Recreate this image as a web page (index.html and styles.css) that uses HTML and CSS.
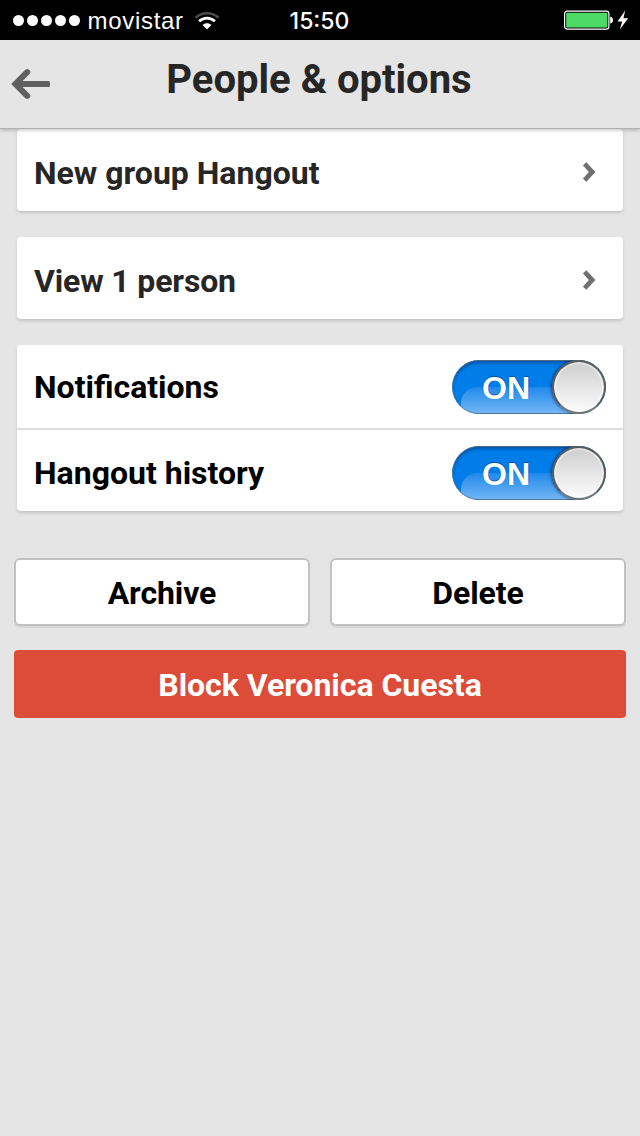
FILE: index.html
```html
<!DOCTYPE html>
<html lang="en">
<head>
<meta charset="utf-8">
<title>People &amp; options</title>
<link rel="stylesheet" href="styles.css">
</head>
<body>
<div class="status">
  <div class="signal"><i class="dot"></i><i class="dot"></i><i class="dot"></i><i class="dot"></i><i class="dot"></i></div>
  <span class="carrier">movistar</span>
  <svg class="wifi" width="26" height="20" viewBox="0 0 26 20" fill="none">
    <path d="M1.6 6.8C8 .7 18 .7 24.4 6.8" stroke="#4b4b4b" stroke-width="2.7"/>
    <path d="M5.1 10.2c4.6-4.2 11.2-4.2 15.8 0" stroke="#fff" stroke-width="2.8"/>
    <path d="M8.6 14c2.4-2.4 6.4-2.4 8.8 0L13 18.6z" fill="#fff"/>
  </svg>
  <span class="time">15:50</span>
  <svg class="battery" width="66" height="24" viewBox="0 0 66 24">
    <rect x=".6" y="3.1" width="44.3" height="18" rx="2.6" fill="#000" stroke="#fff" stroke-width="1.2"/>
    <rect x="2.2" y="4.7" width="41.2" height="14.8" rx="1" fill="#4cd964"/>
    <path d="M46.2 8.7c3.7 0 3.7 6.8 0 6.8z" fill="#fff"/>
    <path d="M61.2 2.5 53.6 13.4h4.6l-2.4 8 8.4-11.2h-4.8z" fill="#fff"/>
  </svg>
</div>
<header class="header">
  <svg class="back" width="42" height="34" viewBox="0 0 42 34" fill="none" stroke="#606060">
    <path d="M18.2 5.2 6.4 17l11.8 11.8" stroke-width="6" stroke-linecap="round"/>
    <rect x="6" y="14" width="35" height="6" rx="1.5" fill="#606060" stroke="none"/>
  </svg>
  <h1 class="title">People &amp; options</h1>
</header>
<main class="content">
  <section class="card link">
    <span>New group Hangout</span>
    <svg class="chevron" width="14" height="22" viewBox="0 0 14 22" fill="none" stroke="#707070" stroke-width="4.8"><path d="M1.6 2.8 9.2 11l-7.6 8.2"/></svg>
  </section>
  <section class="card link">
    <span class="people">View 1 person</span>
    <svg class="chevron" width="14" height="22" viewBox="0 0 14 22" fill="none" stroke="#707070" stroke-width="4.8"><path d="M1.6 2.8 9.2 11l-7.6 8.2"/></svg>
  </section>
  <section class="card settings">
    <div class="row"><span>Notifications</span>
      <div class="toggle"><span class="gloss"></span><b class="state">ON</b><span class="knob"></span></div></div>
    <div class="row second"><span>Hangout history</span>
      <div class="toggle"><span class="gloss"></span><b class="state">ON</b><span class="knob"></span></div></div>
  </section>
  <div class="actions">
    <button class="button">Archive</button>
    <button class="button">Delete</button>
    <button class="button block">Block Veronica Cuesta</button>
  </div>
</main>
</body>
</html>
```
FILE: styles.css
```css
* { box-sizing: border-box; }
body {
  margin: 0;
  min-height: 1136px;
  background: #e5e5e5;
  font: bold 32px/40px Roboto, sans-serif;
  color: #000;
}
svg { display: block; flex: none; }

.status {
  position: relative;
  display: flex;
  align-items: center;
  height: 40px;
  padding: 0 10px 0 13px;
  background: #000;
  color: #fff;
}
.signal { display: flex; gap: 3px; }
.dot { width: 11px; height: 11px; border-radius: 50%; background: #fff; }
.carrier {
  width: 98px;
  margin-left: 7.5px;
  padding-top: 2px;
  font: 400 24px/40px "Liberation Sans", Arial, sans-serif;
  letter-spacing: .7px;
}
.wifi { margin: 1px 0 0 8px; }
.time {
  position: absolute;
  left: 0;
  right: 1px;
  top: 1px;
  text-align: center;
  font: 500 23px/40px Inter, "Liberation Sans", sans-serif;
}
.battery { margin-left: auto; }

.header {
  position: relative;
  z-index: 1;
  display: grid;
  grid-template-columns: 60px 1fr 60px;
  height: 89px;
  border-bottom: 1px solid #b0b0b0;
  background: #e5e5e5;
  box-shadow: 0 1px 4px rgba(0, 0, 0, .25);
}
.back { margin: 27px 0 0 9px; }
.title {
  margin: 0;
  padding-right: 2px;
  text-align: center;
  font-size: 40px;
  line-height: 80px;
  color: #262626;
}

.content { padding: 0 17px; }
.card {
  border-radius: 4px;
  background: #fff;
  box-shadow: 0 2px 3px rgba(0, 0, 0, .15);
}
.link {
  display: flex;
  justify-content: space-between;
  align-items: center;
  height: 82px;
  margin-bottom: 26px;
  padding: 6px 26px 0 17px;
  color: #262626;
}
.people { letter-spacing: -.15px; }
.chevron { margin-top: -2px; }
.settings { height: 166px; }
.row {
  display: flex;
  justify-content: space-between;
  align-items: center;
  height: 84px;
  padding: 0 17px;
}
.second {
  height: 82px;
  padding-top: 6px;
  box-shadow: 0 -1px #dcdcdc, inset 0 1px #dcdcdc;
}

.toggle {
  position: relative;
  width: 154px;
  height: 54px;
  overflow: hidden;
  border-radius: 27px;
  background: #007de9;
}
.toggle::after {
  content: "";
  position: absolute;
  inset: 0;
  border-radius: 27px;
  box-shadow: inset 0 0 0 1px rgba(110, 120, 130, .7), inset 0 3px 4px -1px rgba(0, 20, 60, .6);
}
.gloss {
  position: absolute;
  left: 9px;
  right: 9px;
  top: 27px;
  height: 26px;
  border-radius: 16px 0 0 0;
  background: linear-gradient(#2089ec, #72b5f4);
}
.state {
  position: absolute;
  left: 30px;
  top: 8px;
  font: bold 32px/40px "Liberation Sans", Arial, sans-serif;
  color: #fff;
  text-shadow: 0 -1px 1px rgba(0, 50, 100, .6);
}
.knob {
  position: absolute;
  z-index: 1;
  right: 0;
  top: 0;
  width: 54px;
  height: 54px;
  border: 2px solid #5c5c5c;
  border-bottom-color: #777;
  border-radius: 50%;
  background: linear-gradient(#cecece, #fcfcfc);
  box-shadow: inset 0 0 0 2px rgba(255, 255, 255, .4), -1px 0 3px rgba(0, 20, 60, .6);
}

.actions {
  display: grid;
  grid-template-columns: 1fr 1fr;
  gap: 24px 20px;
  margin: 47px -3px 0;
}
.button {
  height: 68px;
  padding: 2px 0 0;
  border: 2px solid #c2c2c2;
  border-radius: 6px;
  background: #fff;
  box-shadow: 0 2px rgba(0, 0, 0, .06);
  color: #000;
  font: inherit;
  letter-spacing: -.1px;
}
.block {
  grid-column: 1 / -1;
  border-color: #dd4b39;
  border-radius: 4px;
  background: #dd4b39;
  box-shadow: none;
  color: #fff;
  letter-spacing: -.03px;
}
```
